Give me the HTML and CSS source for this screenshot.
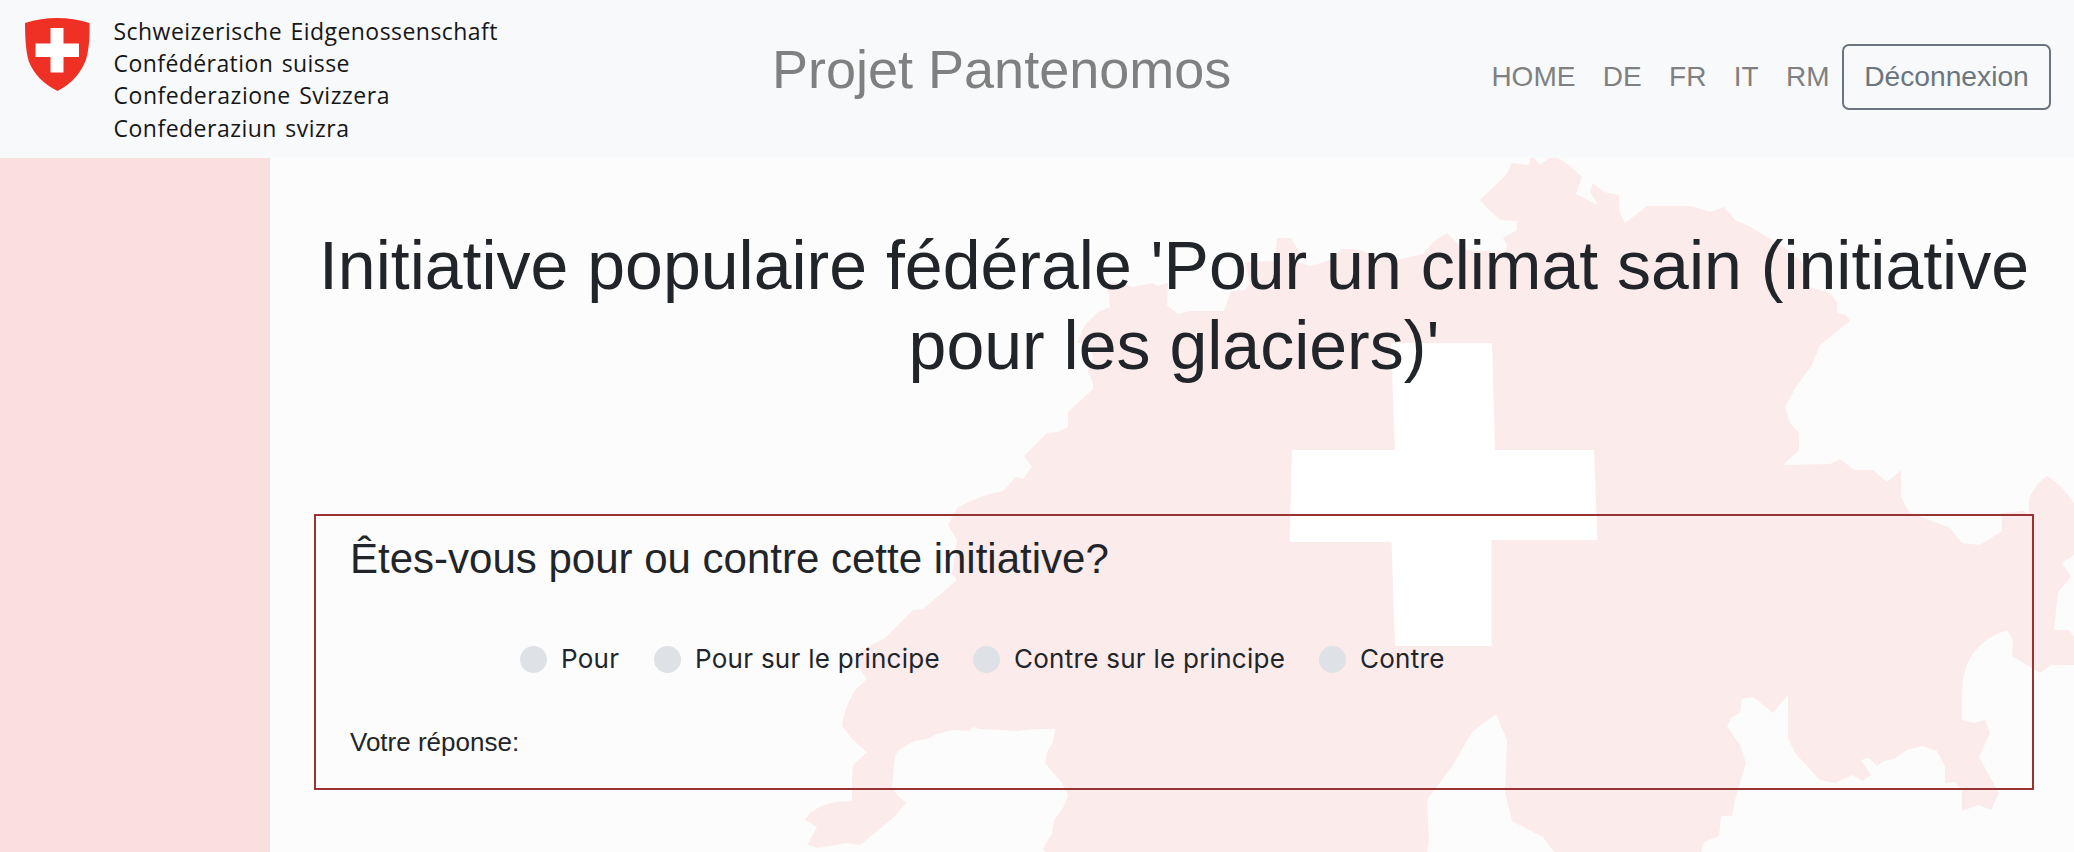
FILE: index.html
```html
<!DOCTYPE html>
<html lang="fr">
<head>
<meta charset="utf-8">
<title>Projet Pantenomos</title>
<link rel="stylesheet" href="styles.css">
</head>
<body>
<header class="navbar">
  <svg class="logo" viewBox="0 0 520 158" role="img" aria-label="Confédération suisse">
    <path fill="#ee3124" d="M25 23Q57 13 89.500 23Q90 50 85 62Q77 81 57.500 91Q37 81 29 62Q25 50 25 23Z"/>
    <path fill="#fff" d="M50.500 28h13v15.500H79v13.500H63.500v15.500h-13V57H35.500V43.500h15z"/>
    <g class="logo-text">
      <text x="113.500" y="40.200" textLength="384">Schweizerische Eidgenossenschaft</text>
      <text x="113.500" y="72.200" textLength="236">Confédération suisse</text>
      <text x="113.500" y="104.400" textLength="276">Confederazione Svizzera</text>
      <text x="113.500" y="136.500" textLength="235.500">Confederaziun svizra</text>
    </g>
  </svg>
  <div class="brand">Projet Pantenomos</div>
  <nav class="links">
    <a>HOME</a><a>DE</a><a>FR</a><a>IT</a><a>RM</a>
    <button class="logout" type="button">Déconnexion</button>
  </nav>
</header>
<div class="layout">
  <aside class="sidebar"></aside>
  <main class="content">
    <svg class="map" viewBox="270 158 1804 694" aria-hidden="true">
      <path fill="#fcebeb" d="M805 820L810 813L820 806.500L835 802L852 801L852 777L853 765L867 752L853 740L842 726Q844 708 855 690L867 679L858 667L860 653L868 647L885 638L913 610L923 609L942 593L957 580L952 573L957 540L948 525L957 508Q980 495 1003 491L1016 477L1023 479L1032 467L1024 456L1047 433L1058 432L1068 427V412L1093 389V384L1088 370L1093 357L1087 343H1077L1085 325L1098 312L1110 307L1109 293L1103 283L1118 283L1133 287L1152 283L1158 286L1168 283L1167 305L1178 314L1190 311H1224L1231 291L1245 290L1250 283L1245 262L1275 261L1277 238H1291L1300 253L1298 262L1310 266L1328 261L1342 249H1357L1375 256L1397 260L1423 254L1433 242L1447 233L1464 250L1505 252L1507 245L1503 238L1517 230V221L1501 220Q1491 213 1480 200L1506 175L1512 163L1529 165L1530 158H1534L1540 165L1549 158H1558Q1569 164 1582 177L1576 194L1598 205L1590 192L1593 183L1604 192L1619 195V210L1625 223L1647 206H1691L1710 212L1724 207L1735 220L1749 226L1788 250L1802 262L1810 287L1830 293L1837 302V313L1846 315L1850 321L1820 345L1812 365L1796 387L1785 407L1790 423L1799 433V450L1783 465L1830 464L1840 459L1854 470H1873L1887 482L1901 470V497L1909 512L1950 528L1962 543L1980 545L2002 531V513L2024 511L2029 515V500Q2033 486 2047 476Q2060 483 2074 503V555L2062 563L2071 577L2058 592L2054 630H2069L2074 637V665H2051L2040 673L2012 656L2013 640L2007 630Q1962 645 1962 693V720L1974 723L1985 720L1990 733L1979 757L1999 793L1991 810L1979 805L1962 811V790L1955 782L1945 783V767L1937 751L1922 746L1907 750L1894 759L1884 761L1877 766L1869 758L1861 760L1871 775L1863 781L1852 775L1835 783L1820 780L1795 753L1788 738V695L1773 713L1753 697L1742 699L1740 713L1732 717L1727 726L1740 745L1746 763L1735 800L1732 816H1721L1719 836L1704 842L1701 852H1554L1543 837L1512 821L1505 793L1507 740L1496 714L1472 732L1453 765L1427 800L1429 840L1427 852H1045L1043 849L1052 833L1054 820L1063 808L1068 795L1062 783L1045 763L1047 752L1053 742L1055 729H1037L1017 731L980 729L973 727L970 731L953 730L937 734L927 739L915 741Q901 747 895 755L892 787L897 795L906 803L893 818L860 845L847 843L818 848L807 845L817 827Z"/>
      <path fill="#fff" d="M1391 343H1492L1495 450H1594L1597.500 540H1491.500V646H1395L1391.500 542H1289.500L1292 450H1395Z"/>
    </svg>
    <h1 class="title">Initiative populaire fédérale 'Pour un climat sain (initiative pour les glaciers)'</h1>
    <section class="question">
      <h3 class="question-title">Êtes-vous pour ou contre cette initiative?</h3>
      <div class="options">
        <label class="option o1"><span class="dot"></span>Pour</label>
        <label class="option o2"><span class="dot"></span>Pour sur le principe</label>
        <label class="option o3"><span class="dot"></span>Contre sur le principe</label>
        <label class="option o4"><span class="dot"></span>Contre</label>
      </div>
      <p class="answer">Votre réponse:</p>
    </section>
  </main>
</div>
</body>
</html>
```
FILE: styles.css
```css
* { box-sizing: border-box; }
body {
  margin: 0;
  height: 852px;
  overflow: hidden;
  background: #fcfcfc;
  color: #212529;
  font-family: "Liberation Sans", Arial, sans-serif;
}
.navbar {
  display: flex;
  align-items: flex-start;
  height: 158px;
  padding-right: 23px;
  background: #f8f9fb;
}
.logo { width: 520px; height: 158px; flex: none; }
.logo-text {
  font-family: "Open Sans", "Noto Sans", sans-serif;
  font-size: 23px;
  word-spacing: 2px;
  fill: #161616;
}
.brand {
  margin: 38px 0 0 252px;
  font-size: 54px;
  line-height: 62px;
  color: #7f807f;
  white-space: nowrap;
}
.links {
  display: flex;
  align-items: center;
  gap: 27.400px;
  height: 66px;
  margin: 44px 0 0 auto;
  font-size: 28px;
  color: #7f807f;
}
.logout {
  width: 209px;
  height: 66px;
  margin-left: -15px;
  padding: 0 0 2px;
  border: 2px solid #6c757d;
  border-radius: 7px;
  background: transparent;
  color: #6c757d;
  font: 28.200px "Liberation Sans", Arial, sans-serif;
}
.layout { display: flex; height: 694px; }
.sidebar { width: 270px; flex: none; background: #fadfdf; }
.content { position: relative; flex: 1; padding: 67px 40px 0 44px; }
.map { position: absolute; inset: 0; width: 1804px; height: 694px; }
.title {
  position: relative;
  margin: 0;
  font-size: 68px;
  line-height: 80px;
  font-weight: 400;
  text-align: center;
}
.question {
  position: relative;
  height: 276px;
  margin-top: 129px;
  padding: 18px 34px 0;
  border: 2px solid #993333;
}
.question-title {
  margin: 0;
  font-size: 42px;
  line-height: 50px;
  font-weight: 400;
}
.options {
  display: flex;
  height: 32px;
  margin: 59px 0 0 170px;
  font: 26px/32px Inter, sans-serif;
  letter-spacing: 0.270px;
  white-space: nowrap;
}
.option { display: flex; align-items: center; gap: 14px; }
.o1 { width: 134px; }
.o2 { width: 319px; }
.o3 { width: 346px; }
.dot { width: 27px; height: 27px; flex: none; border-radius: 50%; background: #dee2e6; }
.answer { margin: 50px 0 0; font-size: 26px; line-height: 34px; }
```
